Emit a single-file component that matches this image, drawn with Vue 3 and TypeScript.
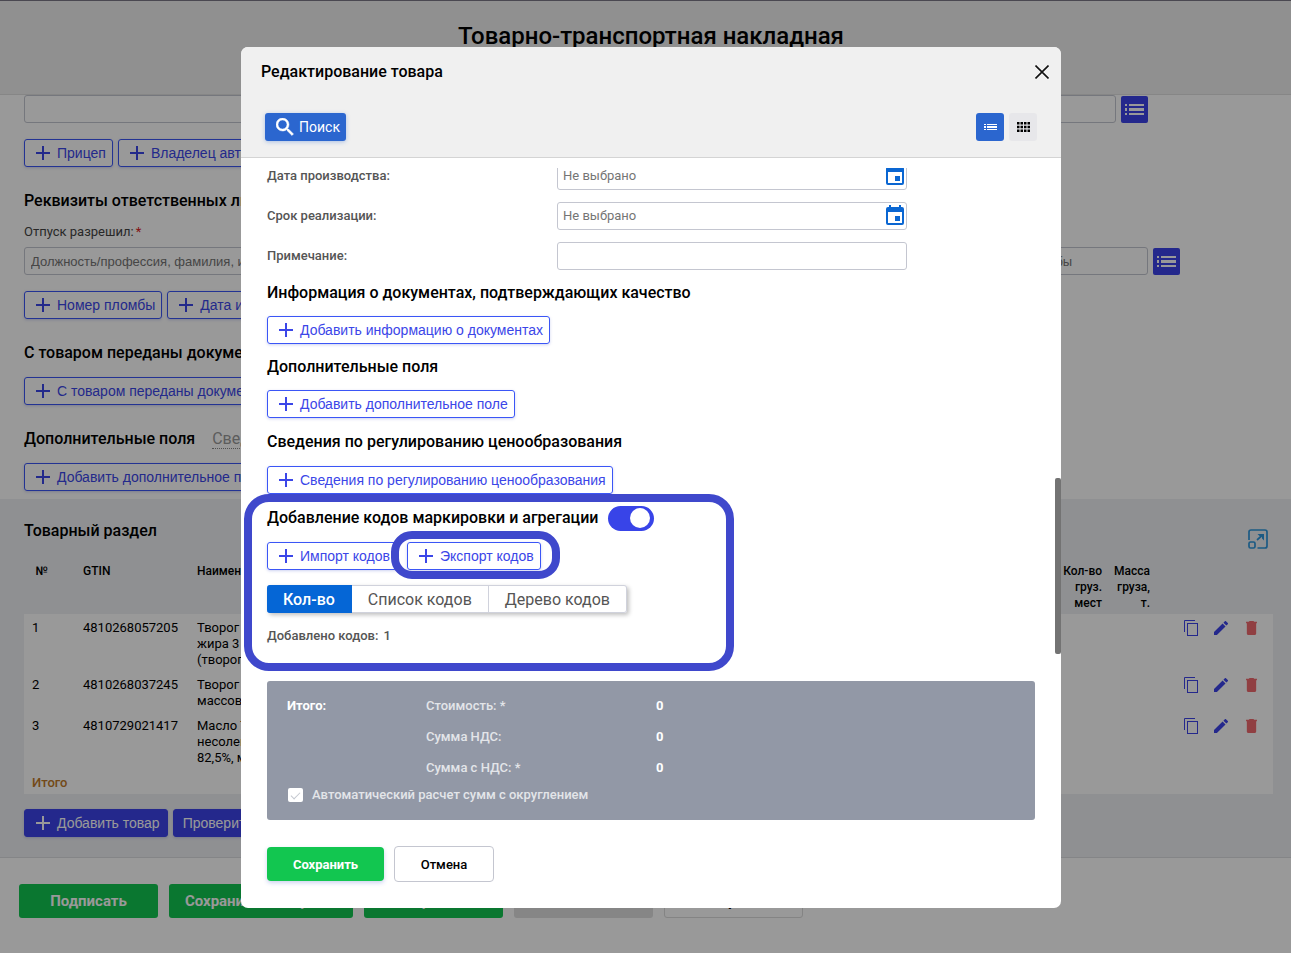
<script setup lang="ts">
import { ref } from 'vue'

interface Product {
  id: number
  gtin: string
  name: string[]
}

const products: Product[] = [
  { id: 1, gtin: '4810268057205', name: ['Творог', 'жира 3 %', '(творог)'] },
  { id: 2, gtin: '4810268037245', name: ['Творог', 'массовая'] },
  { id: 3, gtin: '4810729021417', name: ['Масло Тр.', 'несоленое', '82,5%, м.д.'] },
]

const tabs = ['Кол-во', 'Список кодов', 'Дерево кодов']
const activeTab = ref('Кол-во')

const totals = [
  { label: 'Стоимость: *', value: 0 },
  { label: 'Сумма НДС:', value: 0 },
  { label: 'Сумма с НДС: *', value: 0 },
]

const codesEnabled = ref(true)
const autoSum = ref(true)
</script>

<template>
  <div class="page">
    <header class="page-head">
      <h1>Товарно-транспортная накладная</h1>
    </header>

    <main>
      <section class="form">
        <div class="field-line first">
          <input class="field" type="text" aria-label="Автомобиль" />
          <button class="list-btn" type="button" aria-label="Выбрать автомобиль">
            <svg width="19" height="11" viewBox="0 0 19 11"><path d="M0 0h2v2H0zM4 0h15v2H4zM0 4h2v3H0zM4 4h15v3H4zM0 9h2v2H0zM4 9h15v2H4z" fill="currentColor" /></svg>
          </button>
        </div>
        <div class="btn-line">
          <button class="add" type="button"><i class="plus"></i>Прицеп</button>
          <button class="add" type="button"><i class="plus"></i>Владелец автомобиля</button>
        </div>

        <h2 class="people">Реквизиты ответственных лиц</h2>
        <label class="field-label" for="allowed">Отпуск разрешил:<span class="req">*</span></label>
        <div class="field-line second">
          <input id="allowed" class="field" type="text" placeholder="Должность/профессия, фамилия, инициалы" />
          <input class="field seal" type="text" aria-label="Сдал грузоотправитель" placeholder="Должность, фамилия, инициалы, № пломбы" />
          <button class="list-btn" type="button" aria-label="Выбрать лицо">
            <svg width="19" height="11" viewBox="0 0 19 11"><path d="M0 0h2v2H0zM4 0h15v2H4zM0 4h2v3H0zM4 4h15v3H4zM0 9h2v2H0zM4 9h15v2H4z" fill="currentColor" /></svg>
          </button>
        </div>
        <div class="btn-line">
          <button class="add" type="button"><i class="plus"></i>Номер пломбы</button>
          <button class="add" type="button"><i class="plus"></i>Дата и время</button>
        </div>

        <div class="sub-head"><h2>С товаром переданы документы</h2></div>
        <div><button class="add" type="button"><i class="plus"></i>С товаром переданы документы</button></div>

        <div class="sub-head"><h2>Дополнительные поля</h2><a class="hint" href="#">Сведения</a></div>
        <div><button class="add" type="button"><i class="plus"></i>Добавить дополнительное поле</button></div>
      </section>

      <section class="goods">
        <div class="goods-head">
          <h2>Товарный раздел</h2>
          <button class="icon-btn expand" type="button" aria-label="Развернуть таблицу">
            <svg width="20" height="20" viewBox="0 0 20 20" fill="none" stroke="currentColor" stroke-width="1.700"><path d="M1 11V3q0-2 2-2h14q2 0 2 2v14q0 2-2 2H9.500" /><rect x="1" y="13" width="6" height="6" rx="1.500" /><path d="M9 11l5-4.500" /><path d="M9.500 5H16v6.500l-2-2V7h-2.500z" fill="currentColor" stroke="none" /></svg>
          </button>
        </div>
        <table>
          <colgroup>
            <col class="c-num" /><col class="c-gtin" /><col class="c-name" /><col /><col class="c-places" /><col class="c-mass" /><col class="c-act" />
          </colgroup>
          <thead>
            <tr>
              <th class="center">№</th><th>GTIN</th><th>Наименование</th><th></th>
              <th class="right">Кол-во груз. мест</th><th class="right">Масса груза, т.</th><th></th>
            </tr>
          </thead>
          <tbody>
            <tr v-for="p in products" :key="p.id">
              <td>{{ p.id }}</td>
              <td>{{ p.gtin }}</td>
              <td><div v-for="l in p.name" :key="l">{{ l }}</div></td>
              <td></td><td></td><td></td>
              <td>
                <div class="actions">
                  <button class="icon-btn" type="button" aria-label="Копировать">
                    <svg width="15" height="16" viewBox="0 0 15 16" fill="none" stroke="currentColor"><path d="M.5 12V.5H11" /><rect x="3.500" y="3.500" width="10" height="12" /></svg>
                  </button>
                  <button class="icon-btn" type="button" aria-label="Изменить">
                    <svg width="14" height="14" viewBox="3 3 18 18" fill="currentColor"><path d="M3 17.250V21h3.750L17.810 9.940l-3.750-3.750L3 17.250zM20.710 7.040a1 1 0 0 0 0-1.410l-2.340-2.340a1 1 0 0 0-1.410 0l-1.830 1.830 3.750 3.750 1.830-1.830z" /></svg>
                  </button>
                  <button class="icon-btn del" type="button" aria-label="Удалить">
                    <svg width="11" height="14" viewBox="5 3 14 18" fill="currentColor"><path d="M6 19c0 1.100.9 2 2 2h8c1.100 0 2-.9 2-2V6H6v13zM19 4h-3.500l-1-1h-5l-1 1H5v2h14V4z" /></svg>
                  </button>
                </div>
              </td>
            </tr>
            <tr class="sum"><td colspan="7">Итого</td></tr>
          </tbody>
        </table>
        <div class="btn-line goods-btns">
          <button class="add solid" type="button"><i class="plus"></i>Добавить товар</button>
          <button class="add solid plain" type="button">Проверить товары</button>
        </div>
      </section>
    </main>

    <footer class="page-foot">
      <button class="foot-btn w-s" type="button">Подписать</button>
      <button class="foot-btn w-l" type="button">Сохранить и закрыть</button>
      <button class="foot-btn w-s" type="button">Сохранить</button>
      <button class="foot-btn w-s gray" type="button" disabled>Печать</button>
      <button class="foot-btn w-s white" type="button">Закрыть</button>
    </footer>
  </div>

  <div class="overlay">
    <div class="modal" role="dialog" aria-modal="true" aria-labelledby="modal-title">
      <div class="modal-head">
        <div class="modal-title">
          <h2 id="modal-title">Редактирование товара</h2>
          <button class="icon-btn close" type="button" aria-label="Закрыть">
            <svg width="14" height="14" viewBox="0 0 14 14" fill="none" stroke="currentColor" stroke-width="1.600"><path d="M.5.5l13 13M13.500.5l-13 13" /></svg>
          </button>
        </div>
        <div class="toolbar">
          <button class="search" type="button">
            <svg width="18" height="18" viewBox="3 3 18 18" fill="currentColor"><path d="M15.500 14h-.79l-.28-.27A6.470 6.470 0 0 0 16 9.500 6.500 6.500 0 1 0 9.500 16c1.610 0 3.090-.59 4.230-1.570l.27.28v.79l5 4.990L20.490 19l-4.990-5zm-6 0C7.010 14 5 11.990 5 9.500S7.010 5 9.500 5 14 7.010 14 9.500 11.990 14 9.500 14z" stroke="currentColor" stroke-width=".5" /></svg>
            Поиск
          </button>
          <div class="views">
            <button class="view on" type="button" aria-label="Список">
              <svg width="14" height="6" viewBox="-1 0 14 6"><path d="M0 0h2v1H0zM3 0h10v1H3zM0 2h2v2H0zM3 2h10v2H3zM0 5h2v1H0zM3 5h10v1H3z" fill="currentColor" /></svg>
            </button>
            <button class="view" type="button" aria-label="Таблица">
              <svg width="14" height="10" viewBox="-1 0 14 10"><path d="M0 0h2.500v2.600H0zM3.500 0H6v2.600H3.500zM7 0h2.500v2.600H7zM10.500 0H13v2.600h-2.500zM0 3.700h2.500v2.600H0zM3.500 3.700H6v2.600H3.500zM7 3.700h2.500v2.600H7zM10.500 3.700H13v2.600h-2.500zM0 7.400h2.500V10H0zM3.500 7.400H6V10H3.500zM7 7.400h2.500V10H7zM10.500 7.400H13V10h-2.500z" fill="currentColor" /></svg>
            </button>
          </div>
        </div>
      </div>

      <div class="modal-body">
        <div class="fields">
          <div class="row">
            <label for="made">Дата производства:</label>
            <div class="date">
              <input id="made" class="field" type="text" placeholder="Не выбрано" />
              <svg class="cal" width="18" height="20" viewBox="3 1 18 20" fill="currentColor"><path d="M17 12h-5v5h5v-5zM16 1v2H8V1H6v2H5a2 2 0 0 0-2 2v14a2 2 0 0 0 2 2h14a2 2 0 0 0 2-2V5a2 2 0 0 0-2-2h-1V1h-2zm3 18H5V8h14v11z" /></svg>
            </div>
          </div>
          <div class="row">
            <label for="until">Срок реализации:</label>
            <div class="date">
              <input id="until" class="field" type="text" placeholder="Не выбрано" />
              <svg class="cal" width="18" height="20" viewBox="3 1 18 20" fill="currentColor"><path d="M17 12h-5v5h5v-5zM16 1v2H8V1H6v2H5a2 2 0 0 0-2 2v14a2 2 0 0 0 2 2h14a2 2 0 0 0 2-2V5a2 2 0 0 0-2-2h-1V1h-2zm3 18H5V8h14v11z" /></svg>
            </div>
          </div>
          <div class="row">
            <label for="note">Примечание:</label>
            <div class="date"><input id="note" class="field" type="text" /></div>
          </div>
        </div>

        <h3>Информация о документах, подтверждающих качество</h3>
        <div><button class="add" type="button"><i class="plus"></i>Добавить информацию о документах</button></div>
        <h3>Дополнительные поля</h3>
        <div><button class="add" type="button"><i class="plus"></i>Добавить дополнительное поле</button></div>
        <h3 class="tall">Сведения по регулированию ценообразования</h3>
        <div><button class="add" type="button"><i class="plus"></i>Сведения по регулированию ценообразования</button></div>

        <section class="codes">
          <div class="codes-head">
            <h3 class="tall">Добавление кодов маркировки и агрегации</h3>
            <input v-model="codesEnabled" class="toggle" type="checkbox" role="switch" aria-label="Добавление кодов маркировки и агрегации" />
          </div>
          <div class="codes-btns">
            <button class="add" type="button"><i class="plus"></i>Импорт кодов</button>
            <div class="export">
              <button class="add" type="button"><i class="plus"></i>Экспорт кодов</button>
              <span class="ring ring-small"></span>
            </div>
          </div>
          <div class="tabs" role="tablist">
            <button v-for="t in tabs" :key="t" type="button" role="tab" :class="{ on: t === activeTab }" :aria-selected="t === activeTab" @click="activeTab = t">{{ t }}</button>
          </div>
          <p class="added">Добавлено кодов: <span>1</span></p>
          <span class="ring ring-big"></span>
        </section>

        <section class="totals">
          <div class="sums">
            <b>Итого:</b>
            <dl>
              <div v-for="t in totals" :key="t.label"><dt>{{ t.label }}</dt><dd>{{ t.value }}</dd></div>
            </dl>
          </div>
          <label class="auto"><input v-model="autoSum" type="checkbox" />Автоматический расчет сумм с округлением</label>
        </section>

        <div class="modal-btns">
          <button class="save" type="button">Сохранить</button>
          <button class="cancel" type="button">Отмена</button>
        </div>
      </div>
      <span class="thumb"></span>
    </div>
  </div>
</template>

<style>
body {
  margin: 0;
  background: #fff;
}
</style>

<style scoped>
* {
  box-sizing: border-box;
}
.page,
.overlay {
  font-family: Roboto, 'Liberation Sans', sans-serif;
  font-size: 13px;
  line-height: 16px;
  color: #000;
}
.page {
  min-height: 100vh;
  overflow: hidden;
}
h1,
h2,
h3,
p,
dl,
dd {
  margin: 0;
}
h1 {
  font-size: 24px;
  line-height: 28px;
  font-weight: 500;
}
h2,
h3 {
  font-size: 16px;
  line-height: 20px;
  font-weight: 500;
}
button,
input {
  font-family: inherit;
  font-size: 13px;
}
button {
  cursor: pointer;
}
.page-head {
  height: 95px;
  padding: 21px 0 0 11px;
  text-align: center;
  background: #f0f0f0;
  border-top: 1px solid #7c7888;
  border-bottom: 1px solid #e0e0e0;
}
.form {
  padding: 0 17px 8px 24px;
}
.field {
  width: 100%;
  height: 28px;
  padding: 0 6px;
  border: 1px solid #c4c6d0;
  border-radius: 3px;
  background: transparent;
  color: #000;
  outline: none;
}
.field::placeholder {
  color: #757575;
  opacity: 1;
}
.form .field {
  min-width: 0;
  font-family: 'Liberation Sans', Arial, sans-serif;
}
.field-line {
  display: flex;
  align-items: flex-end;
  gap: 5px;
}
.field-line.first {
  padding-right: 126px;
}
.field-line.second {
  padding-right: 94px;
}
.field.seal {
  width: 352px;
  flex: none;
}
.list-btn {
  flex: none;
  display: flex;
  align-items: center;
  justify-content: center;
  width: 27px;
  height: 27px;
  padding: 0;
  border: 0;
  border-radius: 2px;
  background: #3c43e9;
  color: #fff;
}
.btn-line {
  display: flex;
  gap: 5px;
  margin-top: 16px;
}
.add {
  display: inline-flex;
  align-items: center;
  height: 28px;
  padding: 0 6px 0 11px;
  border: 1px solid #3b56f6;
  border-radius: 3px;
  background: transparent;
  box-shadow: 0 1px 3px rgba(60, 80, 200, 0.25);
  color: #3b46e8;
  font-family: 'Liberation Sans', Arial, sans-serif;
  font-size: 14px;
  white-space: nowrap;
  vertical-align: top;
}
.add.solid {
  padding-right: 7px;
  background: #3c43e9;
  border-color: #3c43e9;
  color: #fff;
}
.add.plain {
  padding-left: 9px;
}
.plus {
  width: 14px;
  height: 14px;
  margin-right: 7px;
  background:
    linear-gradient(currentColor, currentColor) center / 14px 2px no-repeat,
    linear-gradient(currentColor, currentColor) center / 2px 14px no-repeat;
}
.people {
  padding: 24px 0 13px;
}
.field-label {
  display: block;
  margin-bottom: 7px;
  color: #444;
}
.req {
  color: #d22;
  padding-left: 2px;
}
.sub-head {
  display: flex;
  align-items: flex-end;
  height: 58px;
  padding-bottom: 14px;
}
.hint {
  margin-left: 17px;
  font-size: 16px;
  line-height: 18px;
  color: #999;
  text-decoration: none;
  border-bottom: 1px dotted #888;
}
.goods {
  padding: 22px 18px 20px 24px;
  background: #eff1f4;
  border-bottom: 1px solid #dcdee2;
}
.goods-head {
  display: flex;
  justify-content: space-between;
  height: 36px;
}
.icon-btn {
  display: flex;
  padding: 0;
  border: 0;
  background: none;
  color: #3c43e9;
}
.expand {
  align-self: flex-start;
  margin: 8px 5px 0 0;
  color: #2e96dc;
}
table {
  width: 100%;
  table-layout: fixed;
  border-collapse: collapse;
}
th,
td {
  padding: 6px 8px 3px;
  text-align: left;
  vertical-align: top;
}
th {
  font-size: 12px;
  font-weight: 500;
}
th.center {
  text-align: center;
  padding-right: 24px;
}
th.right {
  padding-left: 0;
  text-align: right;
}
tbody {
  background: #fff;
}
.c-num {
  width: 51px;
}
.c-gtin {
  width: 114px;
}
.c-name {
  width: 130px;
}
.c-places {
  width: 51px;
}
.c-mass {
  width: 48px;
}
.c-act {
  width: 115px;
}
.sum td {
  color: #c07a2a;
  font-weight: 500;
}
.actions {
  display: flex;
  align-items: center;
  height: 16px;
  gap: 15px;
  padding-left: 18px;
}
.del {
  margin-left: 3px;
  color: #f06a6e;
}
.goods-btns {
  margin-top: 15px;
}
.page-foot {
  display: flex;
  gap: 11px;
  padding: 26px 19px;
}
.foot-btn {
  height: 34px;
  padding: 0;
  border: 0;
  border-radius: 3px;
  background: #12c650;
  color: #fff;
  font-size: 15px;
  font-weight: 700;
}
.w-s {
  width: 139px;
}
.w-l {
  width: 184px;
}
.foot-btn.gray {
  background: #dfe0e0;
}
.foot-btn.white {
  background: transparent;
  border: 1px solid #dcdcdc;
  color: #000;
}
.overlay {
  position: fixed;
  inset: 0;
  display: flex;
  justify-content: center;
  align-items: flex-start;
  padding: 47px 0 0 11px;
  background: rgba(0, 0, 0, 0.4);
}
.modal {
  position: relative;
  width: 820px;
  border-radius: 7px;
  background: #fff;
  overflow: hidden;
}
.modal-head {
  padding: 15px 12px 16px 20px;
  background: #f0f0f0;
  border-bottom: 1px solid #d4d4d4;
}
.modal-title {
  display: flex;
  justify-content: space-between;
  align-items: center;
}
.close {
  color: #111;
}
.toolbar {
  display: flex;
  justify-content: space-between;
  margin: 31px 12px 0 4px;
}
.search {
  display: flex;
  align-items: center;
  gap: 5px;
  height: 28px;
  padding: 0 6px 0 11px;
  border: 0;
  border-radius: 3px;
  background: #2b66cf;
  box-shadow: 0 1px 4px rgba(43, 102, 207, 0.35);
  color: #fff;
  font-size: 14px;
}
.views {
  display: flex;
  gap: 5px;
}
.view {
  display: flex;
  align-items: center;
  justify-content: center;
  width: 28px;
  height: 28px;
  padding: 0;
  border: 0;
  border-radius: 3px;
  background: #e7e7ea;
  color: #000;
}
.view.on {
  background: #2b66cf;
  color: #fff;
}
.modal-body {
  margin-top: 10px;
  padding: 0 26px 26px;
  overflow: hidden;
}
.fields {
  display: grid;
  gap: 12px;
  margin-top: -6px;
}
.row {
  display: flex;
  align-items: center;
}
.row label {
  width: 290px;
  font-weight: 500;
  color: #555;
}
.date {
  position: relative;
  width: 350px;
}
.date .field {
  display: block;
  padding: 0 5px 2px;
}
.cal {
  position: absolute;
  right: 3px;
  top: 3px;
  color: #0a66d2;
}
h3 {
  display: flex;
  align-items: center;
  height: 46px;
}
h3.tall {
  height: 48px;
}
.codes {
  position: relative;
}
.codes-head {
  display: flex;
  align-items: center;
  gap: 10px;
}
.toggle {
  appearance: none;
  width: 46px;
  height: 25px;
  margin: 0;
  padding: 2px;
  border-radius: 13px;
  background: #bbb;
  cursor: pointer;
}
.toggle::before {
  content: '';
  display: block;
  width: 20px;
  height: 20px;
  border-radius: 50%;
  background: #fff;
}
.toggle:checked {
  background: #3844e8;
}
.toggle:checked::before {
  margin-left: 20px;
}
.codes-btns {
  display: flex;
  gap: 10px;
}
.export {
  position: relative;
}
.ring {
  position: absolute;
  border: 8px solid #3f48cc;
  pointer-events: none;
}
.ring-small {
  inset: -11px -19px -9px -16px;
  border-radius: 21px;
}
.ring-big {
  top: 0;
  left: -23px;
  width: 490px;
  height: 177px;
  border-radius: 25px;
}
.tabs {
  display: flex;
  width: max-content;
  margin-top: 15px;
  border-radius: 3px;
  box-shadow: 2px 2px 4px rgba(0, 0, 0, 0.25);
}
.tabs button {
  height: 28px;
  padding: 0 16px;
  border: 1px solid #d0d2dc;
  border-left-width: 0;
  background: #fff;
  color: #555;
  font-size: 16px;
}
.tabs button:last-child {
  border-radius: 0 3px 3px 0;
}
.tabs button.on {
  border-color: #0566d6;
  border-radius: 3px 0 0 3px;
  background: #0566d6;
  color: #fff;
  font-weight: 500;
}
.added {
  margin-top: 15px;
  font-weight: 500;
  color: #555;
}
.added span {
  margin-left: 2px;
}
.totals {
  margin-top: 37px;
  padding: 17px 20px;
  border-radius: 3px;
  background: #9298a6;
  color: #fff;
  font-weight: 500;
}
.sums {
  display: flex;
}
.sums b {
  width: 139px;
  font-weight: 700;
}
dl {
  display: grid;
  gap: 15px;
}
dl div {
  display: flex;
}
dt {
  width: 230px;
  color: #e3e5e9;
}
dd {
  font-weight: 700;
}
.auto {
  display: flex;
  align-items: center;
  gap: 8px;
  margin-top: 11px;
  color: #e3e5e9;
}
.auto input {
  appearance: none;
  width: 15px;
  height: 14px;
  margin: 0 1px;
  border-radius: 2px;
  background: #fff;
}
.auto input:checked::before {
  content: '';
  display: block;
  width: 8px;
  height: 4px;
  margin: 4px 0 0 3px;
  border: solid #c4c8d0;
  border-width: 0 0 1px 1px;
  transform: rotate(-45deg);
}
.modal-btns {
  display: flex;
  align-items: center;
  gap: 10px;
  margin-top: 26px;
}
.save,
.cancel {
  border-radius: 4px;
  font-weight: 700;
}
.save {
  width: 117px;
  height: 34px;
  border: 0;
  background: #12c650;
  box-shadow: 0 2px 4px rgba(60, 80, 200, 0.25);
  color: #fff;
}
.cancel {
  width: 100px;
  height: 36px;
  border: 1px solid #c4c6d0;
  background: #fff;
  color: #000;
  font-weight: 500;
}
.thumb {
  position: absolute;
  top: 431px;
  right: 0;
  width: 6px;
  height: 176px;
  border-radius: 2px;
  background: #737373;
}
</style>
